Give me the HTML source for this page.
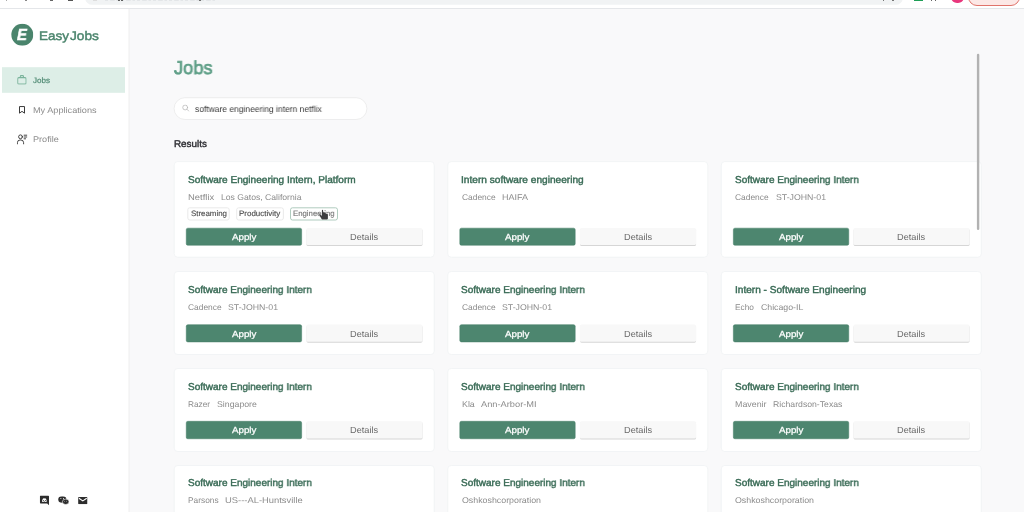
<!DOCTYPE html>
<html><head><meta charset="utf-8"><title>EasyJobs</title>
<style>
html,body{margin:0;padding:0;}
body{width:1024px;height:512px;overflow:hidden;position:relative;background:#f9f9fa;font-family:"Liberation Sans", sans-serif;}
.b{position:absolute;display:block;}
.t{position:absolute;white-space:nowrap;margin:0;will-change:transform;text-rendering:geometricPrecision;}
</style></head><body>
<svg class="b" style="left:0;top:0" width="1024" height="512" viewBox="0 0 1024 512"><defs><filter id="bl" x="-5%" y="-20%" width="110%" height="150%"><feGaussianBlur stdDeviation="0.35"/></filter></defs>
<rect x="0.00" y="0.00" width="1024.00" height="8.00" rx="0" fill="#fff" />
<rect x="0.00" y="8.00" width="1024.00" height="1.00" rx="0" fill="#e4e6e9" />
<rect x="85.00" y="-10.00" width="818.00" height="14.80" rx="7.4" fill="#f1f3f4" />
<line x1="105" y1="0.3" x2="216" y2="0.3" stroke="#d9dbde" stroke-width="0.7" stroke-dasharray="3 2.2 4.5 1.8 2.5 2"/>
<line x1="990" y1="0.3" x2="1012" y2="0.3" stroke="#e9a8a2" stroke-width="0.7" stroke-dasharray="2.5 1.5 4 2"/>
<rect x="0.00" y="9.00" width="129.00" height="503.00" rx="0" fill="#fff" />
<rect x="128.60" y="9.00" width="0.80" height="503.00" rx="0" fill="#ececec" />
<svg x="11.1" y="23.5" width="22.2" height="22.2" viewBox="0 0 44 44">
<circle cx="22.2" cy="22.2" r="21.8" fill="#4a846c"/>

</svg>
<rect x="2.00" y="67.20" width="123.00" height="25.60" rx="0" fill="#ddeee7" />
<svg x="17.2" y="75" width="9.4" height="9.6" viewBox="0 0 18.8 19.2" fill="none" stroke="#7ab39b" stroke-width="2.1" stroke-linejoin="round">
<rect x="1" y="5.2" width="16.8" height="13" rx="2.2"/><path d="M6.3 5V2.6a1.4 1.4 0 0 1 1.4-1.4h3.4a1.4 1.4 0 0 1 1.4 1.4V5"/></svg>
<svg x="18.5" y="105.9" width="7" height="8" viewBox="0 0 14 16" fill="none" stroke="#303030" stroke-width="1.9" stroke-linejoin="round">
<path d="M2 1.3h10v13.2l-5-3.6-5 3.6z"/></svg>
<svg x="16.8" y="134" width="10.6" height="10.6" viewBox="0 0 21.2 21.2" fill="none" stroke="#333" stroke-width="1.8" stroke-linecap="round">
<circle cx="7.4" cy="5.6" r="3.8"/><path d="M1.2 20.2v-2.8a5.4 5.4 0 0 1 5.4-5.4h1.6a5.4 5.4 0 0 1 5.4 5.4v2.8"/>
<path d="M14.6 2.4h5.6M14.6 6h5.6M14.6 9.6h3"/></svg>
<svg x="39.8" y="495.6" width="9.2" height="9.6" viewBox="0 0 18.4 19.2">
<path d="M2 0h14.4a2 2 0 0 1 2 2v17.2l-3.6-3.2H2a2 2 0 0 1-2-2V2a2 2 0 0 1 2-2z" fill="#2d2d2d"/>
<path d="M4.4 11.6c.3-2.6 1-4.4 1.800-5.400 1-.5 2-.7 2.400-.7l.3.500h.6l.3-.5c.4 0 1.400.2 2.400.7.800 1 1.500 2.800 1.800 5.400-1 .9-2.200 1.200-2.800 1.200l-.6-.9h-2.800l-.6.900c-.6 0-1.800-.3-2.800-1.200z" fill="#fff"/>
<circle cx="7.300" cy="9.700" r="1" fill="#2d2d2d"/><circle cx="11.1" cy="9.700" r="1" fill="#2d2d2d"/></svg>
<svg x="58.1" y="496.2" width="11" height="8.6" viewBox="0 0 22 17.2">
<ellipse cx="8.4" cy="6.600" rx="8.2" ry="6.400" fill="#2d2d2d"/>
<ellipse cx="15.2" cy="11.2" rx="6.600" ry="5.400" fill="#2d2d2d" stroke="#fff" stroke-width="1.2"/>
<circle cx="5.600" cy="4.800" r="1" fill="#fff"/><circle cx="10.800" cy="4.800" r="1" fill="#fff"/>
<circle cx="13.2" cy="10" r=".8" fill="#fff"/><circle cx="17.2" cy="10" r=".8" fill="#fff"/></svg>
<svg x="78.1" y="497" width="9.4" height="7.2" viewBox="0 0 18.8 14.400">
<rect width="18.8" height="14.400" rx="1.600" fill="#2d2d2d"/><path d="M1.600 2.400l7.800 5.400 7.800-5.400" fill="none" stroke="#fff" stroke-width="2.200"/></svg>
<rect x="174.10" y="97.70" width="192.80" height="21.80" rx="10.9" fill="#fff" stroke="#e6e6e6" stroke-width="0.7" />
<svg x="182.1" y="104.4" width="7.4" height="7.4" viewBox="0 0 14 14" fill="none" stroke="#b4b4b4" stroke-width="1.400" stroke-linecap="round">
<circle cx="5.800" cy="5.800" r="4.600"/><path d="M9.400 9.400l3.600 3.600"/></svg>
<rect x="174.20" y="161.60" width="260.00" height="95.60" rx="3.5" fill="#fff" stroke="#eef0f2" stroke-width="0.7" />
<rect x="187.80" y="207.80" width="41.40" height="12.20" rx="2" fill="#fff" stroke="#e4e4e4" stroke-width="0.8" />
<rect x="236.70" y="207.80" width="46.70" height="12.20" rx="2" fill="#fff" stroke="#e4e4e4" stroke-width="0.8" />
<rect x="290.50" y="207.80" width="47.00" height="12.20" rx="2" fill="#fff" stroke="#9cbfaf" stroke-width="0.8" />
<rect x="186.25" y="228.15" width="115.40" height="17.10" rx="1.6" fill="#4d866f" stroke="#447d66" stroke-width="0.5" />
<rect x="306.50" y="228.90" width="116.00" height="17.10" rx="1.6" fill="#d6d6d6" filter="url(#bl)"/>
<rect x="306.30" y="228.10" width="116.20" height="17.00" rx="1.6" fill="#f8f8f8" />
<rect x="447.75" y="161.60" width="260.00" height="95.60" rx="3.5" fill="#fff" stroke="#eef0f2" stroke-width="0.7" />
<rect x="459.80" y="228.15" width="115.40" height="17.10" rx="1.6" fill="#4d866f" stroke="#447d66" stroke-width="0.5" />
<rect x="580.05" y="228.90" width="116.00" height="17.10" rx="1.6" fill="#d6d6d6" filter="url(#bl)"/>
<rect x="579.85" y="228.10" width="116.20" height="17.00" rx="1.6" fill="#f8f8f8" />
<rect x="721.30" y="161.60" width="260.00" height="95.60" rx="3.5" fill="#fff" stroke="#eef0f2" stroke-width="0.7" />
<rect x="733.35" y="228.15" width="115.40" height="17.10" rx="1.6" fill="#4d866f" stroke="#447d66" stroke-width="0.5" />
<rect x="853.60" y="228.90" width="116.00" height="17.10" rx="1.6" fill="#d6d6d6" filter="url(#bl)"/>
<rect x="853.40" y="228.10" width="116.20" height="17.00" rx="1.6" fill="#f8f8f8" />
<rect x="174.20" y="271.50" width="260.00" height="83.00" rx="3.5" fill="#fff" stroke="#eef0f2" stroke-width="0.7" />
<rect x="186.25" y="324.65" width="115.40" height="17.30" rx="1.6" fill="#4d866f" stroke="#447d66" stroke-width="0.5" />
<rect x="306.50" y="325.40" width="116.00" height="17.30" rx="1.6" fill="#d6d6d6" filter="url(#bl)"/>
<rect x="306.30" y="324.60" width="116.20" height="17.20" rx="1.6" fill="#f8f8f8" />
<rect x="447.75" y="271.50" width="260.00" height="83.00" rx="3.5" fill="#fff" stroke="#eef0f2" stroke-width="0.7" />
<rect x="459.80" y="324.65" width="115.40" height="17.30" rx="1.6" fill="#4d866f" stroke="#447d66" stroke-width="0.5" />
<rect x="580.05" y="325.40" width="116.00" height="17.30" rx="1.6" fill="#d6d6d6" filter="url(#bl)"/>
<rect x="579.85" y="324.60" width="116.20" height="17.20" rx="1.6" fill="#f8f8f8" />
<rect x="721.30" y="271.50" width="260.00" height="83.00" rx="3.5" fill="#fff" stroke="#eef0f2" stroke-width="0.7" />
<rect x="733.35" y="324.65" width="115.40" height="17.30" rx="1.6" fill="#4d866f" stroke="#447d66" stroke-width="0.5" />
<rect x="853.60" y="325.40" width="116.00" height="17.30" rx="1.6" fill="#d6d6d6" filter="url(#bl)"/>
<rect x="853.40" y="324.60" width="116.20" height="17.20" rx="1.6" fill="#f8f8f8" />
<rect x="174.20" y="368.50" width="260.00" height="83.00" rx="3.5" fill="#fff" stroke="#eef0f2" stroke-width="0.7" />
<rect x="186.25" y="421.30" width="115.40" height="17.45" rx="1.6" fill="#4d866f" stroke="#447d66" stroke-width="0.5" />
<rect x="306.50" y="422.05" width="116.00" height="17.45" rx="1.6" fill="#d6d6d6" filter="url(#bl)"/>
<rect x="306.30" y="421.25" width="116.20" height="17.35" rx="1.6" fill="#f8f8f8" />
<rect x="447.75" y="368.50" width="260.00" height="83.00" rx="3.5" fill="#fff" stroke="#eef0f2" stroke-width="0.7" />
<rect x="459.80" y="421.30" width="115.40" height="17.45" rx="1.6" fill="#4d866f" stroke="#447d66" stroke-width="0.5" />
<rect x="580.05" y="422.05" width="116.00" height="17.45" rx="1.6" fill="#d6d6d6" filter="url(#bl)"/>
<rect x="579.85" y="421.25" width="116.20" height="17.35" rx="1.6" fill="#f8f8f8" />
<rect x="721.30" y="368.50" width="260.00" height="83.00" rx="3.5" fill="#fff" stroke="#eef0f2" stroke-width="0.7" />
<rect x="733.35" y="421.30" width="115.40" height="17.45" rx="1.6" fill="#4d866f" stroke="#447d66" stroke-width="0.5" />
<rect x="853.60" y="422.05" width="116.00" height="17.45" rx="1.6" fill="#d6d6d6" filter="url(#bl)"/>
<rect x="853.40" y="421.25" width="116.20" height="17.35" rx="1.6" fill="#f8f8f8" />
<rect x="174.20" y="465.50" width="260.00" height="83.00" rx="3.5" fill="#fff" stroke="#eef0f2" stroke-width="0.7" />
<rect x="186.25" y="518.25" width="115.40" height="17.30" rx="1.6" fill="#4d866f" stroke="#447d66" stroke-width="0.5" />
<rect x="306.50" y="519.00" width="116.00" height="17.30" rx="1.6" fill="#d6d6d6" filter="url(#bl)"/>
<rect x="306.30" y="518.20" width="116.20" height="17.20" rx="1.6" fill="#f8f8f8" />
<rect x="447.75" y="465.50" width="260.00" height="83.00" rx="3.5" fill="#fff" stroke="#eef0f2" stroke-width="0.7" />
<rect x="459.80" y="518.25" width="115.40" height="17.30" rx="1.6" fill="#4d866f" stroke="#447d66" stroke-width="0.5" />
<rect x="580.05" y="519.00" width="116.00" height="17.30" rx="1.6" fill="#d6d6d6" filter="url(#bl)"/>
<rect x="579.85" y="518.20" width="116.20" height="17.20" rx="1.6" fill="#f8f8f8" />
<rect x="721.30" y="465.50" width="260.00" height="83.00" rx="3.5" fill="#fff" stroke="#eef0f2" stroke-width="0.7" />
<rect x="733.35" y="518.25" width="115.40" height="17.30" rx="1.6" fill="#4d866f" stroke="#447d66" stroke-width="0.5" />
<rect x="853.60" y="519.00" width="116.00" height="17.30" rx="1.6" fill="#d6d6d6" filter="url(#bl)"/>
<rect x="853.40" y="518.20" width="116.20" height="17.20" rx="1.6" fill="#f8f8f8" />
<rect x="976.90" y="53.80" width="2.40" height="176.20" rx="1.2" fill="#b2b2b2" />
</svg>
<div class="b" style="left:67.50px;top:0.00px;width:5.50px;height:0.80px;background:#555;"></div>
<div class="b" style="left:25.00px;top:0.00px;width:1.50px;height:0.60px;background:#888;"></div>
<div class="b" style="left:6.00px;top:0.00px;width:1.20px;height:0.50px;background:#aaa;"></div>
<div class="b" style="left:50.00px;top:0.00px;width:2.50px;height:0.90px;background:#666;"></div>
<div class="b" style="left:93.00px;top:0.00px;width:3.50px;height:0.90px;background:#ddd;"></div>
<div class="b" style="left:118.30px;top:0.00px;width:1.60px;height:1.30px;background:#333;border-radius:0 0 1px 1px;"></div>
<div class="b" style="left:121.00px;top:0.00px;width:1.60px;height:1.30px;background:#333;border-radius:0 0 1px 1px;"></div>
<div class="b" style="left:199.00px;top:0.00px;width:1.60px;height:1.30px;background:#444;border-radius:0 0 1px 1px;"></div>
<div class="b" style="left:913.70px;top:0.00px;width:9.30px;height:1.00px;background:#1e9e57;"></div>
<div class="b" style="left:951.40px;top:-9.20px;width:12.60px;height:12.60px;background:#e8367c;border-radius:50%;"></div>
<div class="b" style="left:968.40px;top:-12.00px;width:51.60px;height:17.90px;background:#fce8e6;border:0.8px solid #e0736b;border-radius:9px;box-sizing:border-box;"></div>
<div class="b" style="left:883.00px;top:0.00px;width:1.00px;height:0.80px;background:#777;"></div>
<div class="b" style="left:892.00px;top:0.00px;width:2.20px;height:0.80px;background:#777;"></div>
<div class="b" style="left:931.00px;top:0.00px;width:1.40px;height:0.80px;background:#666;"></div>
<div class="b" style="left:935.00px;top:0.00px;width:1.40px;height:0.80px;background:#666;"></div>
<div class="t " id="t0" style="left:16.70px;top:27.00px;font-size:16.0px;line-height:17px;font-weight:700;color:#fff;transform-origin:0 0;transform:scaleX(0.9277);font-style:italic;-webkit-text-stroke:0.5px #fff;">E</div>
<div class="t " id="t1" style="left:39.30px;top:29.00px;font-size:12.4px;line-height:14px;font-weight:400;color:#4a846c;transform-origin:0 0;transform:scaleX(1.0891);-webkit-text-stroke:0.42px #4a846c;">Easy</div>
<div class="t " id="t2" style="left:70.10px;top:29.00px;font-size:12.4px;line-height:14px;font-weight:400;color:#4a846c;transform-origin:0 0;transform:scaleX(1.1036);-webkit-text-stroke:0.42px #4a846c;">Jobs</div>
<div class="t " id="t3" style="left:33.00px;top:76.00px;font-size:7.8px;line-height:9px;font-weight:400;color:#4f8a73;transform-origin:0 0;transform:scaleX(1.0313);-webkit-text-stroke:0.2px #4f8a73;">Jobs</div>
<div class="t " id="t4" style="left:33.40px;top:105.00px;font-size:8.3px;line-height:10px;font-weight:400;color:#8a8a8a;transform-origin:0 0;transform:scaleX(1.1031);">My Applications</div>
<div class="t " id="t5" style="left:33.40px;top:134.00px;font-size:8.3px;line-height:10px;font-weight:400;color:#8a8a8a;transform-origin:0 0;transform:scaleX(1.0964);">Profile</div>
<div class="t " id="t6" style="left:173.90px;top:57.00px;font-size:18.6px;line-height:21px;font-weight:400;color:#5f9f87;transform-origin:0 0;transform:scaleX(0.9801);-webkit-text-stroke:0.75px #5f9f87;">Jobs</div>
<div class="t " id="t7" style="left:195.00px;top:104.00px;font-size:8.8px;line-height:10px;font-weight:400;color:#3a3a3a;transform-origin:0 0;transform:scaleX(0.9632);">software engineering intern netflix</div>
<div class="t " id="t8" style="left:174.40px;top:139.00px;font-size:9.7px;line-height:11px;font-weight:400;color:#2e2e33;transform-origin:0 0;transform:scaleX(1.0182);-webkit-text-stroke:0.4px #2e2e33;">Results</div>
<div class="t " id="t9" style="left:187.80px;top:175.00px;font-size:10.0px;line-height:11px;font-weight:400;color:#386a55;transform-origin:0 0;transform:scaleX(1.0056);-webkit-text-stroke:0.42px #386a55;">Software Engineering Intern, Platform</div>
<div class="t " id="t10" style="left:188.00px;top:192.00px;font-size:8.3px;line-height:10px;font-weight:400;color:#8b8b8b;transform-origin:0 0;transform:scaleX(1.1360);">Netflix</div>
<div class="t " id="t11" style="left:221.00px;top:192.00px;font-size:8.3px;line-height:10px;font-weight:400;color:#8b8b8b;transform-origin:0 0;transform:scaleX(1.0389);">Los Gatos, California</div>
<div class="t " id="t12" style="left:190.50px;top:209.00px;font-size:7.8px;line-height:9px;font-weight:400;color:#505050;transform-origin:0 0;transform:scaleX(1.0099);-webkit-text-stroke:0.15px #505050;">Streaming</div>
<div class="t " id="t13" style="left:239.40px;top:209.00px;font-size:7.8px;line-height:9px;font-weight:400;color:#505050;transform-origin:0 0;transform:scaleX(1.0220);-webkit-text-stroke:0.15px #505050;">Productivity</div>
<div class="t " id="t14" style="left:293.20px;top:209.00px;font-size:7.8px;line-height:9px;font-weight:400;color:#787878;transform-origin:0 0;transform:scaleX(0.9970);-webkit-text-stroke:0.15px #787878;">Engineering</div>
<div class="t " id="t15" style="left:231.50px;top:232.00px;font-size:8.8px;line-height:10px;font-weight:400;color:#fff;transform-origin:0 0;transform:scaleX(1.1083);-webkit-text-stroke:0.25px #fff;">Apply</div>
<div class="t " id="t16" style="left:350.30px;top:232.00px;font-size:8.9px;line-height:10px;font-weight:400;color:#686868;transform-origin:0 0;transform:scaleX(1.0353);">Details</div>
<div class="t " id="t17" style="left:461.35px;top:175.00px;font-size:10.0px;line-height:11px;font-weight:400;color:#386a55;transform-origin:0 0;transform:scaleX(1.0125);-webkit-text-stroke:0.42px #386a55;">Intern software engineering</div>
<div class="t " id="t18" style="left:461.55px;top:192.00px;font-size:8.3px;line-height:10px;font-weight:400;color:#8b8b8b;transform-origin:0 0;transform:scaleX(1.0115);">Cadence</div>
<div class="t " id="t19" style="left:501.95px;top:192.00px;font-size:8.3px;line-height:10px;font-weight:400;color:#8b8b8b;transform-origin:0 0;transform:scaleX(1.0840);">HAIFA</div>
<div class="t " id="t20" style="left:505.05px;top:232.00px;font-size:8.8px;line-height:10px;font-weight:400;color:#fff;transform-origin:0 0;transform:scaleX(1.1083);-webkit-text-stroke:0.25px #fff;">Apply</div>
<div class="t " id="t21" style="left:623.85px;top:232.00px;font-size:8.9px;line-height:10px;font-weight:400;color:#686868;transform-origin:0 0;transform:scaleX(1.0353);">Details</div>
<div class="t " id="t22" style="left:734.90px;top:175.00px;font-size:10.0px;line-height:11px;font-weight:400;color:#386a55;transform-origin:0 0;transform:scaleX(0.9986);-webkit-text-stroke:0.42px #386a55;">Software Engineering Intern</div>
<div class="t " id="t23" style="left:735.10px;top:192.00px;font-size:8.3px;line-height:10px;font-weight:400;color:#8b8b8b;transform-origin:0 0;transform:scaleX(1.0115);">Cadence</div>
<div class="t " id="t24" style="left:775.50px;top:192.00px;font-size:8.3px;line-height:10px;font-weight:400;color:#8b8b8b;transform-origin:0 0;transform:scaleX(1.0530);">ST-JOHN-01</div>
<div class="t " id="t25" style="left:778.60px;top:232.00px;font-size:8.8px;line-height:10px;font-weight:400;color:#fff;transform-origin:0 0;transform:scaleX(1.1083);-webkit-text-stroke:0.25px #fff;">Apply</div>
<div class="t " id="t26" style="left:897.40px;top:232.00px;font-size:8.9px;line-height:10px;font-weight:400;color:#686868;transform-origin:0 0;transform:scaleX(1.0353);">Details</div>
<div class="t " id="t27" style="left:187.80px;top:285.00px;font-size:10.0px;line-height:11px;font-weight:400;color:#386a55;transform-origin:0 0;transform:scaleX(0.9986);-webkit-text-stroke:0.42px #386a55;">Software Engineering Intern</div>
<div class="t " id="t28" style="left:188.00px;top:302.00px;font-size:8.3px;line-height:10px;font-weight:400;color:#8b8b8b;transform-origin:0 0;transform:scaleX(1.0115);">Cadence</div>
<div class="t " id="t29" style="left:228.40px;top:302.00px;font-size:8.3px;line-height:10px;font-weight:400;color:#8b8b8b;transform-origin:0 0;transform:scaleX(1.0530);">ST-JOHN-01</div>
<div class="t " id="t30" style="left:231.50px;top:329.00px;font-size:8.8px;line-height:10px;font-weight:400;color:#fff;transform-origin:0 0;transform:scaleX(1.1083);-webkit-text-stroke:0.25px #fff;">Apply</div>
<div class="t " id="t31" style="left:350.30px;top:329.00px;font-size:8.9px;line-height:10px;font-weight:400;color:#686868;transform-origin:0 0;transform:scaleX(1.0353);">Details</div>
<div class="t " id="t32" style="left:461.35px;top:285.00px;font-size:10.0px;line-height:11px;font-weight:400;color:#386a55;transform-origin:0 0;transform:scaleX(0.9986);-webkit-text-stroke:0.42px #386a55;">Software Engineering Intern</div>
<div class="t " id="t33" style="left:461.55px;top:302.00px;font-size:8.3px;line-height:10px;font-weight:400;color:#8b8b8b;transform-origin:0 0;transform:scaleX(1.0115);">Cadence</div>
<div class="t " id="t34" style="left:501.95px;top:302.00px;font-size:8.3px;line-height:10px;font-weight:400;color:#8b8b8b;transform-origin:0 0;transform:scaleX(1.0530);">ST-JOHN-01</div>
<div class="t " id="t35" style="left:505.05px;top:329.00px;font-size:8.8px;line-height:10px;font-weight:400;color:#fff;transform-origin:0 0;transform:scaleX(1.1083);-webkit-text-stroke:0.25px #fff;">Apply</div>
<div class="t " id="t36" style="left:623.85px;top:329.00px;font-size:8.9px;line-height:10px;font-weight:400;color:#686868;transform-origin:0 0;transform:scaleX(1.0353);">Details</div>
<div class="t " id="t37" style="left:734.90px;top:285.00px;font-size:10.0px;line-height:11px;font-weight:400;color:#386a55;transform-origin:0 0;transform:scaleX(1.0086);-webkit-text-stroke:0.42px #386a55;">Intern - Software Engineering</div>
<div class="t " id="t38" style="left:735.10px;top:302.00px;font-size:8.3px;line-height:10px;font-weight:400;color:#8b8b8b;transform-origin:0 0;transform:scaleX(0.9883);">Echo</div>
<div class="t " id="t39" style="left:760.60px;top:302.00px;font-size:8.3px;line-height:10px;font-weight:400;color:#8b8b8b;transform-origin:0 0;transform:scaleX(1.0542);">Chicago-IL</div>
<div class="t " id="t40" style="left:778.60px;top:329.00px;font-size:8.8px;line-height:10px;font-weight:400;color:#fff;transform-origin:0 0;transform:scaleX(1.1083);-webkit-text-stroke:0.25px #fff;">Apply</div>
<div class="t " id="t41" style="left:897.40px;top:329.00px;font-size:8.9px;line-height:10px;font-weight:400;color:#686868;transform-origin:0 0;transform:scaleX(1.0353);">Details</div>
<div class="t " id="t42" style="left:187.80px;top:382.00px;font-size:10.0px;line-height:11px;font-weight:400;color:#386a55;transform-origin:0 0;transform:scaleX(0.9986);-webkit-text-stroke:0.42px #386a55;">Software Engineering Intern</div>
<div class="t " id="t43" style="left:188.00px;top:399.00px;font-size:8.3px;line-height:10px;font-weight:400;color:#8b8b8b;transform-origin:0 0;transform:scaleX(0.9801);">Razer</div>
<div class="t " id="t44" style="left:216.50px;top:399.00px;font-size:8.3px;line-height:10px;font-weight:400;color:#8b8b8b;transform-origin:0 0;transform:scaleX(1.0548);">Singapore</div>
<div class="t " id="t45" style="left:231.50px;top:425.00px;font-size:8.8px;line-height:10px;font-weight:400;color:#fff;transform-origin:0 0;transform:scaleX(1.1083);-webkit-text-stroke:0.25px #fff;">Apply</div>
<div class="t " id="t46" style="left:350.30px;top:425.00px;font-size:8.9px;line-height:10px;font-weight:400;color:#686868;transform-origin:0 0;transform:scaleX(1.0353);">Details</div>
<div class="t " id="t47" style="left:461.35px;top:382.00px;font-size:10.0px;line-height:11px;font-weight:400;color:#386a55;transform-origin:0 0;transform:scaleX(0.9986);-webkit-text-stroke:0.42px #386a55;">Software Engineering Intern</div>
<div class="t " id="t48" style="left:461.55px;top:399.00px;font-size:8.3px;line-height:10px;font-weight:400;color:#8b8b8b;transform-origin:0 0;transform:scaleX(1.0667);">Kla</div>
<div class="t " id="t49" style="left:481.15px;top:399.00px;font-size:8.3px;line-height:10px;font-weight:400;color:#8b8b8b;transform-origin:0 0;transform:scaleX(1.1165);">Ann-Arbor-MI</div>
<div class="t " id="t50" style="left:505.05px;top:425.00px;font-size:8.8px;line-height:10px;font-weight:400;color:#fff;transform-origin:0 0;transform:scaleX(1.1083);-webkit-text-stroke:0.25px #fff;">Apply</div>
<div class="t " id="t51" style="left:623.85px;top:425.00px;font-size:8.9px;line-height:10px;font-weight:400;color:#686868;transform-origin:0 0;transform:scaleX(1.0353);">Details</div>
<div class="t " id="t52" style="left:734.90px;top:382.00px;font-size:10.0px;line-height:11px;font-weight:400;color:#386a55;transform-origin:0 0;transform:scaleX(0.9986);-webkit-text-stroke:0.42px #386a55;">Software Engineering Intern</div>
<div class="t " id="t53" style="left:735.10px;top:399.00px;font-size:8.3px;line-height:10px;font-weight:400;color:#8b8b8b;transform-origin:0 0;transform:scaleX(1.0672);">Mavenir</div>
<div class="t " id="t54" style="left:773.40px;top:399.00px;font-size:8.3px;line-height:10px;font-weight:400;color:#8b8b8b;transform-origin:0 0;transform:scaleX(1.0451);">Richardson-Texas</div>
<div class="t " id="t55" style="left:778.60px;top:425.00px;font-size:8.8px;line-height:10px;font-weight:400;color:#fff;transform-origin:0 0;transform:scaleX(1.1083);-webkit-text-stroke:0.25px #fff;">Apply</div>
<div class="t " id="t56" style="left:897.40px;top:425.00px;font-size:8.9px;line-height:10px;font-weight:400;color:#686868;transform-origin:0 0;transform:scaleX(1.0353);">Details</div>
<div class="t " id="t57" style="left:187.80px;top:478.00px;font-size:10.0px;line-height:11px;font-weight:400;color:#386a55;transform-origin:0 0;transform:scaleX(0.9986);-webkit-text-stroke:0.42px #386a55;">Software Engineering Intern</div>
<div class="t " id="t58" style="left:188.00px;top:495.00px;font-size:8.3px;line-height:10px;font-weight:400;color:#8b8b8b;transform-origin:0 0;transform:scaleX(1.0053);">Parsons</div>
<div class="t " id="t59" style="left:225.40px;top:495.00px;font-size:8.3px;line-height:10px;font-weight:400;color:#8b8b8b;transform-origin:0 0;transform:scaleX(1.1310);">US---AL-Huntsville</div>
<div class="t " id="t60" style="left:231.50px;top:522.00px;font-size:8.8px;line-height:10px;font-weight:400;color:#fff;transform-origin:0 0;transform:scaleX(1.1083);-webkit-text-stroke:0.25px #fff;">Apply</div>
<div class="t " id="t61" style="left:350.30px;top:522.00px;font-size:8.9px;line-height:10px;font-weight:400;color:#686868;transform-origin:0 0;transform:scaleX(1.0353);">Details</div>
<div class="t " id="t62" style="left:461.35px;top:478.00px;font-size:10.0px;line-height:11px;font-weight:400;color:#386a55;transform-origin:0 0;transform:scaleX(0.9986);-webkit-text-stroke:0.42px #386a55;">Software Engineering Intern</div>
<div class="t " id="t63" style="left:461.55px;top:495.00px;font-size:8.3px;line-height:10px;font-weight:400;color:#8b8b8b;transform-origin:0 0;transform:scaleX(1.0637);">Oshkoshcorporation</div>
<div class="t " id="t64" style="left:505.05px;top:522.00px;font-size:8.8px;line-height:10px;font-weight:400;color:#fff;transform-origin:0 0;transform:scaleX(1.1083);-webkit-text-stroke:0.25px #fff;">Apply</div>
<div class="t " id="t65" style="left:623.85px;top:522.00px;font-size:8.9px;line-height:10px;font-weight:400;color:#686868;transform-origin:0 0;transform:scaleX(1.0353);">Details</div>
<div class="t " id="t66" style="left:734.90px;top:478.00px;font-size:10.0px;line-height:11px;font-weight:400;color:#386a55;transform-origin:0 0;transform:scaleX(0.9986);-webkit-text-stroke:0.42px #386a55;">Software Engineering Intern</div>
<div class="t " id="t67" style="left:735.10px;top:495.00px;font-size:8.3px;line-height:10px;font-weight:400;color:#8b8b8b;transform-origin:0 0;transform:scaleX(1.0637);">Oshkoshcorporation</div>
<div class="t " id="t68" style="left:778.60px;top:522.00px;font-size:8.8px;line-height:10px;font-weight:400;color:#fff;transform-origin:0 0;transform:scaleX(1.1083);-webkit-text-stroke:0.25px #fff;">Apply</div>
<div class="t " id="t69" style="left:897.40px;top:522.00px;font-size:8.9px;line-height:10px;font-weight:400;color:#686868;transform-origin:0 0;transform:scaleX(1.0353);">Details</div>
<svg class="b" style="left:0;top:0;pointer-events:none" width="1024" height="512" viewBox="0 0 1024 512">
<path d="M321.900 210.400 Q321.900 209.700 322.500 209.700 Q323.100 209.700 323.100 210.400 L323.100 212.300 L325.200 212.500 Q325.700 212.550 325.700 213 L325.700 213.700 L327.400 214 Q327.900 214.100 327.900 214.600 L327.900 218.500 Q327.900 219.600 326.900 219.600 L322.700 219.600 Q322 219.600 321.600 219 L319.200 215 Q318.900 214.400 319.500 214.200 Q320.100 214 320.600 214.500 L321.900 216 Z" fill="#3c3d3f" stroke="#ffffff" stroke-width="0.5" stroke-linejoin="round" paint-order="stroke"/>
</svg>
</body></html>
